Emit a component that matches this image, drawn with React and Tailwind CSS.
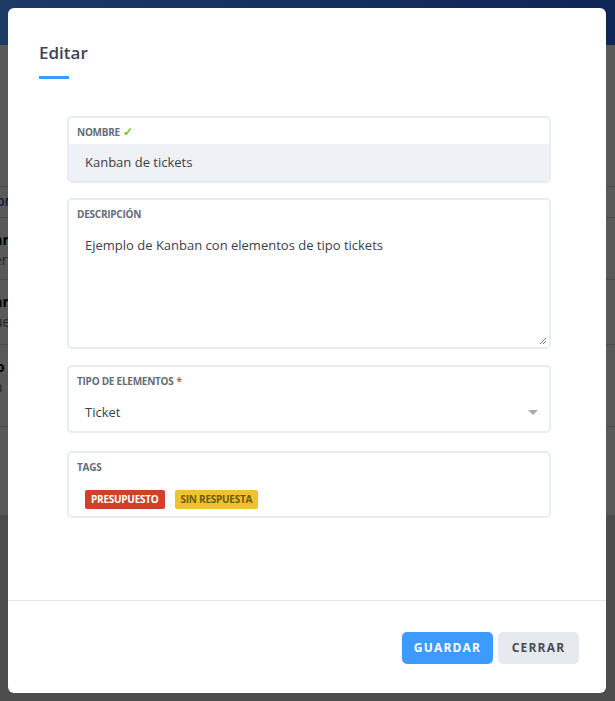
import React from "react";

function Field({ label, extra, children, className = "" }) {
  return (
    <div className={`rounded-[5px] border-2 border-[#e8ecf1] bg-white overflow-hidden ${className}`}>
      <div className="px-[8px] pt-[7px] text-[10px] font-bold uppercase leading-[14px] text-[#656c78] tracking-tight">
        {label}
        {extra}
      </div>
      {children}
    </div>
  );
}

export default function App() {
  return (
    <div className="relative h-[701px] w-[615px] overflow-hidden bg-[#dcdcdc] font-['Open_Sans',sans-serif]">
      {/* page behind the modal */}
      <div className="h-[45px]" />
      <div className="h-[470px] bg-white">
        <div className="h-[142px] border-b border-[#d6d6d6]" />
        <div className="flex h-[31px] items-center border-b border-[#d6d6d6] px-0 text-[11px] font-bold text-[#1e5aa8]">
          <span className="-ml-[4px]">OM</span>
        </div>
        <div className="h-[62px] border-b border-[#d6d6d6] pt-[12px] leading-[20px] text-[14px]">
          <div className="-ml-[6px] font-bold text-black">ar</div>
          <div className="-ml-[6px] text-[#666]">er</div>
        </div>
        <div className="h-[65px] border-b border-[#d6d6d6] pt-[12px] leading-[20px] text-[14px]">
          <div className="-ml-[6px] font-bold text-black">ar</div>
          <div className="-ml-[6px] text-[#666]">ue</div>
        </div>
        <div className="h-[82px] border-b border-[#d6d6d6] pt-[12px] leading-[20px] text-[14px]">
          <div className="-ml-[4px] font-bold text-black">o</div>
          <div className="-ml-[6px] text-[#666]">n</div>
        </div>
      </div>
      <div className="absolute inset-0 bg-black/[0.65]" />
      <div className="absolute left-0 top-0 h-[45px] w-full bg-gradient-to-r from-[#1b3a66] to-[#0f2557]" />

      {/* modal */}
      <div className="absolute left-[8px] top-[8px] flex h-[685px] w-[598px] flex-col rounded-[6px] bg-white">
        <div className="flex-1">
          <div className="pl-[31px] pt-[33px]">
            <h2 className="text-[17px] font-semibold leading-[24px] text-[#3e4551]">Editar</h2>
            <div className="mt-[11px] h-[3px] w-[30px] bg-[#3d9bff]" />
          </div>

          <div className="ml-[59px] mt-[37px] w-[484px]">
            <Field
              label="Nombre"
              extra={<span className="ml-[3px] text-[12px] font-bold text-[#7cbd2b]">✓</span>}
            >
              <div className="mt-[5px] flex h-[37px] items-center bg-[#eef1f5] px-[16px] text-[13px] text-[#3b414b]">
                Kanban de tickets
              </div>
            </Field>

            <Field label="Descripción" className="mt-[15px]">
              <div className="relative h-[126px] px-[16px] pt-[15px] text-[13px] text-[#3b414b]">
                Ejemplo de Kanban con elementos de tipo tickets
                <svg className="absolute bottom-[2px] right-[2px]" width="8" height="8" viewBox="0 0 8 8">
                  <path d="M7 1L1 7M7 4L4 7" stroke="#777" strokeWidth="1" />
                </svg>
              </div>
            </Field>

            <Field
              label="Tipo de elementos"
              extra={<span className="ml-[3px] text-[#f0533d]">*</span>}
              className="mt-[16px]"
            >
              <div className="flex h-[43px] items-center justify-between pl-[16px] pr-[11px] pt-[6px] text-[13px] text-[#3b414b]">
                <span>Ticket</span>
                <svg width="10" height="6" viewBox="0 0 10 6">
                  <path d="M0 0h10L5 5z" fill="#a5a9b0" />
                </svg>
              </div>
            </Field>

            <Field label="Tags" className="mt-[18px]">
              <div className="flex h-[42px] items-start gap-[10px] px-[16px] pt-[16px]">
                <span className="rounded-[2px] bg-[#d0402a] px-[6px] text-[10px] font-bold leading-[19px] text-white tracking-tight">
                  PRESUPUESTO
                </span>
                <span className="rounded-[2px] bg-[#f2c12e] px-[6px] text-[10px] font-bold leading-[19px] text-[#6b5b12] tracking-tight">
                  SIN RESPUESTA
                </span>
              </div>
            </Field>
          </div>
        </div>

        <div className="flex h-[93px] items-start justify-end gap-[5px] border-t border-[#e5e9ef] pr-[27px] pt-[31px]">
          <button className="h-[32px] w-[91px] rounded-[5px] bg-[#3d9bff] text-[12px] font-bold tracking-[0.1em] text-white">
            GUARDAR
          </button>
          <button className="h-[32px] w-[81px] rounded-[5px] bg-[#e6e9ee] text-[12px] font-bold tracking-[0.1em] text-[#474c55]">
            CERRAR
          </button>
        </div>
      </div>
    </div>
  );
}
